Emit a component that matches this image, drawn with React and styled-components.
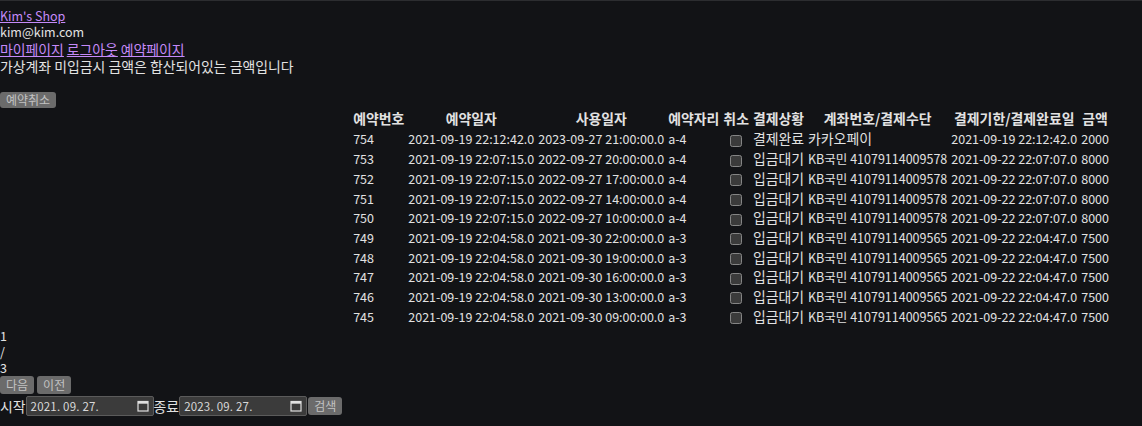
import React from "react";
import styled, { createGlobalStyle } from "styled-components";

const KO = "13.9px";

const GlobalStyle = createGlobalStyle`
  html, body {
    margin: 0;
    background: #121316;
    color: #e2e2e2;
    color-scheme: dark;
  }
  body {
    border-top: 1px solid #2c2d30;
    padding-top: 7px;
    font-family: "Noto Sans CJK KR", "Noto Sans", sans-serif;
    font-size: 12.5px;
    line-height: 16.3px;
  }
`;

const Line = styled.div`
  white-space: nowrap;
  font-size: ${(p) => (p.$ko ? KO : "12.5px")};
`;

const NavLink = styled.a`
  color: #c58af9;
  text-decoration: underline;
  font-size: ${(p) => (p.$ko ? KO : "12.5px")};
`;

const Spacer = styled.div`
  height: ${(p) => p.h || 16}px;
`;

const Button = styled.button`
  font-family: "Noto Sans CJK KR", sans-serif;
  font-size: 12px;
  line-height: 14px;
  color: #c2c2c2;
  background: #6b6b6b;
  border: none;
  border-radius: 3px;
  padding: ${(p) => (p.$slim ? "1px 6px" : "2px 6px")};
  margin: ${(p) => p.m || "0"};
  cursor: pointer;
`;

const Table = styled.table`
  margin-left: auto;
  margin-right: 30px;
  border-spacing: 2px;
  white-space: nowrap;
`;

const Th = styled.th`
  font-size: ${KO};
  font-weight: bold;
  line-height: 16px;
  padding: 0 1px 2px;
  text-align: center;
`;

const Td = styled.td`
  padding: 1px;
  font-size: ${(p) => (p.$ko ? KO : "12.5px")};
  line-height: 15.7px;
  text-align: left;
`;

const CheckCell = styled.td`
  padding: 0 1px;
  text-align: center;
  input {
    margin: 0;
    width: 12px;
    height: 12px;
    vertical-align: middle;
  }
`;

const SearchRow = styled.div`
  display: flex;
  align-items: center;
  white-space: nowrap;
  margin-top: 2px;
`;

const Label = styled.span`
  font-size: ${KO};
`;

const DateBox = styled.div`
  display: flex;
  align-items: center;
  justify-content: space-between;
  width: 118px;
  height: 18px;
  padding: 0 4px;
  background: #3b3b3b;
  border: 1px solid #5b5b5b;
  border-radius: 2px;
  font-size: 11.5px;
  color: #d8d8d8;
  letter-spacing: 0.2px;
`;

const rows = [
  ["754", "2021-09-19 22:12:42.0", "2023-09-27 21:00:00.0", "a-4", "결제완료", "카카오페이", "2021-09-19 22:12:42.0", "2000"],
  ["753", "2021-09-19 22:07:15.0", "2022-09-27 20:00:00.0", "a-4", "입금대기", "KB국민 41079114009578", "2021-09-22 22:07:07.0", "8000"],
  ["752", "2021-09-19 22:07:15.0", "2022-09-27 17:00:00.0", "a-4", "입금대기", "KB국민 41079114009578", "2021-09-22 22:07:07.0", "8000"],
  ["751", "2021-09-19 22:07:15.0", "2022-09-27 14:00:00.0", "a-4", "입금대기", "KB국민 41079114009578", "2021-09-22 22:07:07.0", "8000"],
  ["750", "2021-09-19 22:07:15.0", "2022-09-27 10:00:00.0", "a-4", "입금대기", "KB국민 41079114009578", "2021-09-22 22:07:07.0", "8000"],
  ["749", "2021-09-19 22:04:58.0", "2021-09-30 22:00:00.0", "a-3", "입금대기", "KB국민 41079114009565", "2021-09-22 22:04:47.0", "7500"],
  ["748", "2021-09-19 22:04:58.0", "2021-09-30 19:00:00.0", "a-3", "입금대기", "KB국민 41079114009565", "2021-09-22 22:04:47.0", "7500"],
  ["747", "2021-09-19 22:04:58.0", "2021-09-30 16:00:00.0", "a-3", "입금대기", "KB국민 41079114009565", "2021-09-22 22:04:47.0", "7500"],
  ["746", "2021-09-19 22:04:58.0", "2021-09-30 13:00:00.0", "a-3", "입금대기", "KB국민 41079114009565", "2021-09-22 22:04:47.0", "7500"],
  ["745", "2021-09-19 22:04:58.0", "2021-09-30 09:00:00.0", "a-3", "입금대기", "KB국민 41079114009565", "2021-09-22 22:04:47.0", "7500"],
];

const CalendarIcon = () => (
  <svg width="12" height="12" viewBox="0 0 12 12" fill="none">
    <rect x="1" y="1.5" width="10" height="9.5" stroke="#e0e0e0" strokeWidth="1.2" />
    <rect x="1" y="1.5" width="10" height="2.2" fill="#e0e0e0" />
  </svg>
);

const DateField = ({ value }) => (
  <DateBox>
    <span>{value}</span>
    <CalendarIcon />
  </DateBox>
);

const App = () => {
  return (
    <>
      <GlobalStyle />
      <Line>
        <NavLink href="#">Kim's Shop</NavLink>
      </Line>
      <Line>kim@kim.com</Line>
      <Line>
        <NavLink $ko href="#">마이페이지</NavLink> <NavLink $ko href="#">로그아웃</NavLink>{" "}
        <NavLink $ko href="#">예약페이지</NavLink>
      </Line>
      <Line $ko>가상계좌 미입금시 금액은 합산되어있는 금액입니다</Line>
      <Spacer h={18} />
      <Button $slim>예약취소</Button>
      <Table>
        <thead>
          <tr>
            <Th>예약번호</Th>
            <Th>예약일자</Th>
            <Th>사용일자</Th>
            <Th>예약자리</Th>
            <Th>취소</Th>
            <Th>결제상황</Th>
            <Th>계좌번호/결제수단</Th>
            <Th>결제기한/결제완료일</Th>
            <Th>금액</Th>
          </tr>
        </thead>
        <tbody>
          {rows.map((r) => (
            <tr key={r[0]}>
              <Td>{r[0]}</Td>
              <Td>{r[1]}</Td>
              <Td>{r[2]}</Td>
              <Td>{r[3]}</Td>
              <CheckCell>
                <input type="checkbox" />
              </CheckCell>
              <Td $ko>{r[4]}</Td>
              <Td $ko={r[5] === "카카오페이"}>{r[5]}</Td>
              <Td>{r[6]}</Td>
              <Td>{r[7]}</Td>
            </tr>
          ))}
        </tbody>
      </Table>
      <Line>1</Line>
      <Line>/</Line>
      <Line>3</Line>
      <div>
        <Button>다음</Button>
        <Button m="0 0 0 3px">이전</Button>
      </div>
      <SearchRow>
        <Label>시작</Label>
        <DateField value="2021. 09. 27." />
        <Label>종료</Label>
        <DateField value="2023. 09. 27." />
        <Button m="0 0 0 1px">검색</Button>
      </SearchRow>
    </>
  );
};

export default App;
